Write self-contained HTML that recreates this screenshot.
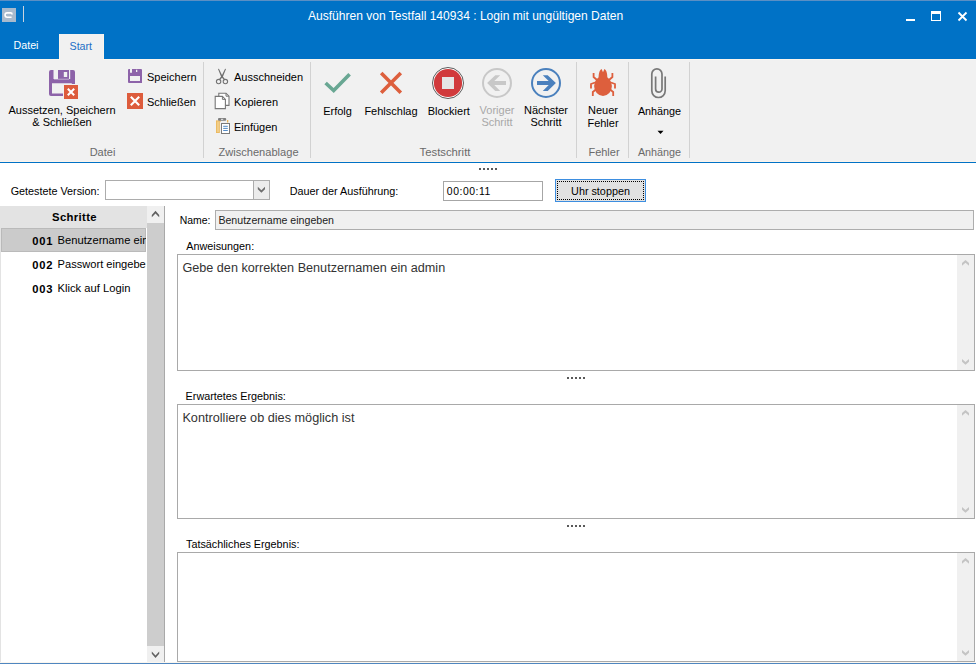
<!DOCTYPE html>
<html><head><meta charset="utf-8">
<style>
*{margin:0;padding:0;box-sizing:border-box}
html,body{width:976px;height:665px;overflow:hidden;background:#fff}
body{position:relative;font-family:"Liberation Sans",sans-serif;color:#000}
.a{position:absolute}
.t{position:absolute;white-space:nowrap;line-height:1.15}
.c{text-align:center}
svg{position:absolute;overflow:visible}
</style></head><body>

<!-- title bar -->
<div class="a" style="left:0;top:0;width:976px;height:59px;background:#0072c6"></div>
<div class="a" style="left:0;top:0;width:976px;height:1px;background:#5b8fc4"></div>
<div class="a" style="left:2px;top:8px;width:14px;height:14px;background:#a8bacd"></div>
<svg style="left:0;top:0" width="30" height="30"><path d="M11.6,17.2 H7.2 A2.15,2.15 0 0 1 7.2,12.9 H10.6 A1.5,1.5 0 0 1 12.1,14.4" fill="none" stroke="#fff" stroke-width="1.6"/></svg>
<div class="a" style="left:23px;top:6px;width:1px;height:16px;background:#c9d3de"></div>
<div class="t" style="left:308px;top:9.6px;font-size:12.05px;color:#fff">Ausführen von Testfall 140934 : Login mit ungültigen Daten</div>
<div class="a" style="left:906px;top:19px;width:9px;height:2px;background:#fff"></div>
<div class="a" style="left:931px;top:11px;width:10px;height:10px;border:1px solid #fff;border-top-width:3px"></div>
<svg style="left:0;top:0" width="976" height="30"><path d="M958.5,12.5 L966.5,20.5 M966.5,12.5 L958.5,20.5" stroke="#fff" stroke-width="1.8"/></svg>

<!-- tabs -->
<div class="t" style="left:13.5px;top:39px;font-size:10.7px;color:#fff">Datei</div>
<div class="a" style="left:59px;top:34px;width:45px;height:26px;background:#f1f1f1;border-left:1px solid #fbf5ec;border-right:1px solid #fbf5ec"></div>
<div class="t" style="left:69.5px;top:39.8px;font-size:10.7px;color:#1c6fc6">Start</div>

<!-- ribbon -->
<div class="a" style="left:0;top:59px;width:976px;height:103px;background:#f1f1f1"></div>
<div class="a" style="left:0;top:59px;width:60px;height:1px;background:#fbf6ee"></div><div class="a" style="left:103px;top:59px;width:873px;height:1px;background:#fbf6ee"></div>
<div class="a" style="left:0;top:161px;width:976px;height:1px;background:#fbf3ea"></div>
<div class="a" style="left:0;top:162px;width:976px;height:1px;background:#0072c6"></div>
<div class="a" style="left:203px;top:62px;width:1px;height:96px;background:#d2d2d2"></div>
<div class="a" style="left:310px;top:62px;width:1px;height:96px;background:#d2d2d2"></div>
<div class="a" style="left:576px;top:62px;width:1px;height:96px;background:#d2d2d2"></div>
<div class="a" style="left:628px;top:62px;width:1px;height:96px;background:#d2d2d2"></div>
<div class="a" style="left:689px;top:62px;width:1px;height:96px;background:#d2d2d2"></div>

<!-- Datei group -->
<svg style="left:0;top:0" width="976" height="170">
 <!-- big floppy -->
 <path d="M51,70 H53.5 V79 H58 V70 H69 V79 H70.2 V70 H73 A2,2 0 0 1 75,72 V96 H51 A2,2 0 0 1 49,94 V72 A2,2 0 0 1 51,70 Z M52,83.3 V93.5 H71.8 V83.3 Z M63.8,72 V77 H67.2 V72 Z" fill="#8d63a9" fill-rule="evenodd"/>
 <rect x="54" y="78.8" width="15" height="0.7" fill="#f1f1f1" opacity="0.7"/>
 <rect x="63" y="84" width="16" height="16" fill="#f1f1f1"/>
 <rect x="64" y="85" width="14" height="14" fill="#dd5c3c"/>
 <path d="M67.8,88.8 L74.2,95.2 M74.2,88.8 L67.8,95.2" stroke="#fff" stroke-width="2"/>
 <!-- small floppy -->
 <path d="M129,69 H130 V72.7 H132 V69 H141 A1,1 0 0 1 142,70 V83 H129 A1,1 0 0 1 128,82 V70 A1,1 0 0 1 129,69 Z M130,76 V81 H140 V76 Z M136,69.8 V72 H137.3 V69.8 Z" fill="#8d63a9" fill-rule="evenodd"/>
 <!-- small X -->
 <rect x="127" y="93" width="16" height="16" fill="#dd5c3c"/>
 <path d="M130.8,96.8 L139.2,105.2 M139.2,96.8 L130.8,105.2" stroke="#fff" stroke-width="2.1"/>
</svg>
<div class="t c" style="left:0;top:103.7px;width:124px;font-size:11px;line-height:12.2px;color:#000">Aussetzen, Speichern<br>&amp; Schließen</div>
<div class="t" style="left:147px;top:71.3px;font-size:11px">Speichern</div>
<div class="t" style="left:147px;top:96.3px;font-size:11px">Schließen</div>
<div class="t c" style="left:102.5px;top:146px;width:80px;margin-left:-40px;font-size:11px;color:#6a6a6a">Datei</div>

<!-- Zwischenablage -->
<svg style="left:0;top:0" width="976" height="170">
 <!-- scissors -->
 <path d="M218,69 L218.9,68.8 L222.6,76.2 L225.3,79.4 L224.1,80 L221.2,76.9 Z" fill="#6f6f6f"/><path d="M226,69 L225.1,68.8 L221.4,76.2 L218.7,79.4 L219.9,80 L222.8,76.9 Z" fill="#6f6f6f"/>
 <circle cx="218.6" cy="81.6" r="2.2" stroke="#747474" stroke-width="1.1" fill="none"/>
 <circle cx="225.4" cy="81.6" r="2.2" stroke="#747474" stroke-width="1.1" fill="none"/>
 <!-- copy -->
 <path d="M218.8,93.2 H226 L229,96.2 V105.4 H218.8 Z" fill="#fff" stroke="#777" stroke-width="1.1"/>
 <path d="M215.2,96.4 H222.4 L225.4,99.4 V108.6 H215.2 Z" fill="#fff" stroke="#777" stroke-width="1.1"/>
 <path d="M222.4,96.4 V99.4 H225.4" fill="none" stroke="#777" stroke-width="1"/>
 <path d="M226,93.2 V96.2 H229" fill="none" stroke="#777" stroke-width="1"/>
 <!-- paste -->
 <rect x="216" y="120.4" width="3.8" height="12.6" fill="#ebb75a"/>
 <rect x="216.8" y="121.4" width="2.2" height="10.8" fill="#f1cd87"/>
 <rect x="219.5" y="120.4" width="1.5" height="1.2" fill="#ebb75a"/>
 <rect x="227" y="120" width="1.3" height="2.5" fill="#ebb75a"/>
 <rect x="218" y="118" width="8.2" height="2.8" rx="1" fill="#808080"/>
 <rect x="221" y="118.8" width="2.2" height="1.2" fill="#d8d8d8"/>
 <rect x="221.5" y="123.5" width="8" height="10" fill="#fff" stroke="#7a7a7a" stroke-width="1"/>
 <path d="M223.2,126.3 H227.8 M223.2,128.4 H227.8 M223.2,130.5 H227.8" stroke="#3f7fc1" stroke-width="0.9"/>
</svg>
<div class="t" style="left:234px;top:71.3px;font-size:11px">Ausschneiden</div>
<div class="t" style="left:234px;top:96.3px;font-size:11px">Kopieren</div>
<div class="t" style="left:234px;top:121px;font-size:11px">Einfügen</div>
<div class="t c" style="left:258.5px;top:146px;width:120px;margin-left:-60px;font-size:11.1px;color:#6a6a6a">Zwischenablage</div>

<!-- Testschritt -->
<svg style="left:0;top:0" width="976" height="170">
 <path d="M325.6,83 L333.7,90.6 L349.6,74.3" fill="none" stroke="#69a793" stroke-width="3.6"/>
 <path d="M381.2,73 L400.8,92.8 M400.8,73 L381.2,92.8" stroke="#dd5f3d" stroke-width="3.6"/>
 <circle cx="448" cy="83" r="15.5" fill="#fff" stroke="#4a4a4a" stroke-width="0.9"/>
 <circle cx="448" cy="83" r="14.1" fill="#d13a3c"/>
 <rect x="442" y="77" width="12" height="12" fill="#e5e5e5"/>
 <circle cx="497" cy="83" r="14" fill="none" stroke="#c8c8c8" stroke-width="2"/>
 <path d="M506,81.1 H494.3 L500.2,75.2 H495.3 L487.1,83.1 L495.3,91.1 H500.2 L494.3,85 H506 Z" fill="#c8c8c8"/>
 <circle cx="546" cy="83" r="14" fill="none" stroke="#4a80bd" stroke-width="2"/>
 <path d="M537,81.1 H548.7 L542.8,75.2 H547.7 L555.9,83.1 L547.7,91.1 H542.8 L548.7,85 H537 Z" fill="#4a80bd"/>
</svg>
<div class="t c" style="left:337.5px;top:104.5px;width:60px;margin-left:-30px;font-size:11px">Erfolg</div>
<div class="t c" style="left:391px;top:104.5px;width:80px;margin-left:-40px;font-size:11px">Fehlschlag</div>
<div class="t c" style="left:448.8px;top:104.5px;width:80px;margin-left:-40px;font-size:11px">Blockiert</div>
<div class="t c" style="left:497px;top:104px;width:80px;margin-left:-40px;font-size:11px;line-height:12.4px;color:#a8a8a8">Voriger<br>Schritt</div>
<div class="t c" style="left:546px;top:104px;width:80px;margin-left:-40px;font-size:11px;line-height:12.4px">Nächster<br>Schritt</div>
<div class="t c" style="left:445px;top:146px;width:120px;margin-left:-60px;font-size:11.3px;color:#6a6a6a">Testschritt</div>

<!-- Fehler -->
<svg style="left:0;top:0" width="976" height="170">
 <g fill="#dd5f3d">
  <ellipse cx="603" cy="86" rx="8.9" ry="9.9"/>
  <path d="M598.6,79 C598.6,73 599.5,70 601.6,69 L603,72.2 L604.4,69 C606.5,70 607.4,73 607.4,79 Z"/>
 </g>
 <g stroke="#dd5f3d" stroke-width="1.8" fill="none">
  <path d="M593.6,73 V77 L597,80"/><path d="M612.4,73 V77 L609,80"/>
  <path d="M591,88.5 V84 L595,82.5"/><path d="M615,88.5 V84 L611,82.5"/>
  <path d="M592.8,96 V92 L596,89.5"/><path d="M613.2,96 V92 L610,89.5"/>
 </g>
</svg>
<div class="t c" style="left:603px;top:104px;width:60px;margin-left:-30px;font-size:11px;line-height:12.6px">Neuer<br>Fehler</div>
<div class="t c" style="left:604px;top:146px;width:60px;margin-left:-30px;font-size:11px;color:#6a6a6a">Fehler</div>

<!-- Anhänge -->
<svg style="left:0;top:0" width="976" height="170">
 <path d="M655.6,76.5 V89 A3.2,3.2 0 0 0 662,89 V74 A5.1,5.1 0 0 0 651.8,74 V90.8 A6.7,6.7 0 0 0 665.2,90.8 V76.5" fill="none" stroke="#787878" stroke-width="1.7"/>
 <path d="M657.5,130.8 H663.5 L660.5,134 Z" fill="#000"/>
</svg>
<div class="t c" style="left:659.5px;top:104.5px;width:60px;margin-left:-30px;font-size:10.8px">Anhänge</div>
<div class="t c" style="left:659.5px;top:146px;width:60px;margin-left:-30px;font-size:10.8px;color:#6a6a6a">Anhänge</div>


<!-- form -->
<!-- splitter dots -->
<svg style="left:0;top:0" width="976" height="665">
 <g fill="#595959">
  <rect x="479" y="168" width="2" height="2"/><rect x="483" y="168" width="2" height="2"/><rect x="487" y="168" width="2" height="2"/><rect x="491" y="168" width="2" height="2"/><rect x="495" y="168" width="2" height="2"/>
  <rect x="567" y="377" width="2" height="2"/><rect x="571" y="377" width="2" height="2"/><rect x="575" y="377" width="2" height="2"/><rect x="579" y="377" width="2" height="2"/><rect x="583" y="377" width="2" height="2"/>
  <rect x="567" y="525" width="2" height="2"/><rect x="571" y="525" width="2" height="2"/><rect x="575" y="525" width="2" height="2"/><rect x="579" y="525" width="2" height="2"/><rect x="583" y="525" width="2" height="2"/>
 </g>
</svg>

<div class="t" style="left:10.7px;top:185.2px;font-size:10.8px">Getestete Version:</div>
<div class="a" style="left:105px;top:180px;width:165px;height:20px;border:1px solid #acacac;background:#fff"></div>
<div class="a" style="left:253px;top:181px;width:16px;height:18px;border-left:1px solid #acacac;background:#ececec"></div>
<svg style="left:0;top:0" width="976" height="665"><path d="M257.8,189.2 L261.4,192.8 L265,189.2 V186.8 L261.4,190.3 L257.8,186.8 Z" fill="#6e6e6e"/></svg>

<div class="t" style="left:289.7px;top:185.2px;font-size:10.8px">Dauer der Ausführung:</div>
<div class="a" style="left:443px;top:181px;width:100px;height:20px;border:1px solid #a6a6a6;background:#fff"></div>
<div class="t" style="left:446.8px;top:186.3px;font-size:10.4px;letter-spacing:0.55px">00:00:11</div>
<div class="a" style="left:555px;top:179px;width:91px;height:23px;border:1px solid #3d8ee0;background:#e1e1e1"></div>
<div class="a" style="left:557px;top:181px;width:87px;height:19px;border:1px dotted #000"></div>
<div class="t c" style="left:600.5px;top:184.8px;width:100px;margin-left:-50px;font-size:10.8px">Uhr stoppen</div>

<!-- left list -->
<div class="a" style="left:0;top:206px;width:147px;height:22px;background:#e3e3e3"></div>
<div class="t c" style="left:74.5px;top:210.5px;width:100px;margin-left:-50px;font-size:11.3px;letter-spacing:0.35px;font-weight:bold">Schritte</div>
<div class="a" style="left:0;top:228px;width:1px;height:434px;background:#e3e3e3"></div>
<div class="a" style="left:1px;top:228px;width:145px;height:24px;border:1px solid #bababa;background:#cbcbcb"></div>
<div class="a" style="left:147px;top:206px;width:17px;height:457px;background:#cdcdcd"></div>
<div class="a" style="left:147px;top:206px;width:17px;height:17px;background:#f0f0f0"></div>
<div class="a" style="left:147px;top:646px;width:17px;height:17px;background:#f0f0f0"></div>
<div class="a" style="left:164px;top:206px;width:1px;height:457px;background:#a9a9a9"></div>
<svg style="left:0;top:0" width="976" height="665">
 <path d="M151.8,215 L155.5,210.8 L159.2,215 V217.2 L155.5,213.4 L151.8,217.2 Z" fill="#606060"/>
 <path d="M151.8,653.8 L155.5,658 L159.2,653.8 V651.6 L155.5,655.4 L151.8,651.6 Z" fill="#606060"/>
</svg>
<div class="a" style="left:0;top:229.5px;width:146px;height:80px;overflow:hidden">
 <div class="t" style="left:32.3px;top:5.1px;font-size:11.2px;letter-spacing:0.7px;font-weight:bold">001</div>
 <div class="t" style="left:57.6px;top:4.4px;font-size:11.2px">Benutzername eingeben</div>
 <div class="t" style="left:32.3px;top:29.1px;font-size:11.2px;letter-spacing:0.7px;font-weight:bold">002</div>
 <div class="t" style="left:57.6px;top:28.4px;font-size:11.1px">Passwort eingeben</div>
 <div class="t" style="left:32.3px;top:53.1px;font-size:11.2px;letter-spacing:0.7px;font-weight:bold">003</div>
 <div class="t" style="left:57.6px;top:52.4px;font-size:11.2px">Klick auf Login</div>
</div>
</div>

<!-- right panel -->
<div class="t" style="left:179.7px;top:214.8px;font-size:10.45px">Name:</div>
<div class="a" style="left:215px;top:210px;width:759px;height:20px;border:1px solid #adadad;background:#f0f0f0"></div>
<div class="t" style="left:218.4px;top:214.4px;font-size:10.62px;color:#222">Benutzername eingeben</div>

<div class="t" style="left:186.3px;top:239.5px;font-size:10.8px">Anweisungen:</div>
<div class="a" style="left:177px;top:254px;width:798px;height:117px;border:1px solid #a9a9a9;background:#fff"></div>
<div class="a" style="left:957px;top:255px;width:17px;height:115px;background:#f0f0f0"></div>
<div class="t" style="left:182.4px;top:260.8px;font-size:12.65px;color:#333">Gebe den korrekten Benutzernamen ein admin</div>

<div class="t" style="left:185.6px;top:389.7px;font-size:10.8px">Erwartetes Ergebnis:</div>
<div class="a" style="left:177px;top:404px;width:798px;height:115px;border:1px solid #a9a9a9;background:#fff"></div>
<div class="a" style="left:957px;top:405px;width:17px;height:113px;background:#f0f0f0"></div>
<div class="t" style="left:182.4px;top:411px;font-size:12.7px;color:#333">Kontrolliere ob dies möglich ist</div>

<div class="t" style="left:186px;top:537.8px;font-size:10.8px">Tatsächliches Ergebnis:</div>
<div class="a" style="left:177px;top:552px;width:798px;height:110px;border:1px solid #a9a9a9;background:#fff"></div>
<div class="a" style="left:957px;top:553px;width:17px;height:108px;background:#f0f0f0"></div>

<svg style="left:0;top:0" width="976" height="665">
 <g fill="#c4c4c4"><path d="M962,263.0 L965.5,260.0 L969,263.0 V265.8 L965.5,262.8 L962,265.8 Z"/><path d="M962,361.8 L965.5,364.8 L969,361.8 V359.0 L965.5,362.0 L962,359.0 Z"/><path d="M962,413.0 L965.5,410.0 L969,413.0 V415.8 L965.5,412.8 L962,415.8 Z"/><path d="M962,509.8 L965.5,512.8 L969,509.8 V507.0 L965.5,510.0 L962,507.0 Z"/><path d="M962,561.0 L965.5,558.0 L969,561.0 V563.8 L965.5,560.8 L962,563.8 Z"/><path d="M962,652.8 L965.5,655.8 L969,652.8 V650.0 L965.5,653.0 L962,650.0 Z"/></g>
</svg>


<div class="a" style="left:0;top:662px;width:976px;height:1px;background:#fbf6ee"></div>
<div class="a" style="left:0;top:663px;width:976px;height:1px;background:#4f86c0"></div>
</body></html>
